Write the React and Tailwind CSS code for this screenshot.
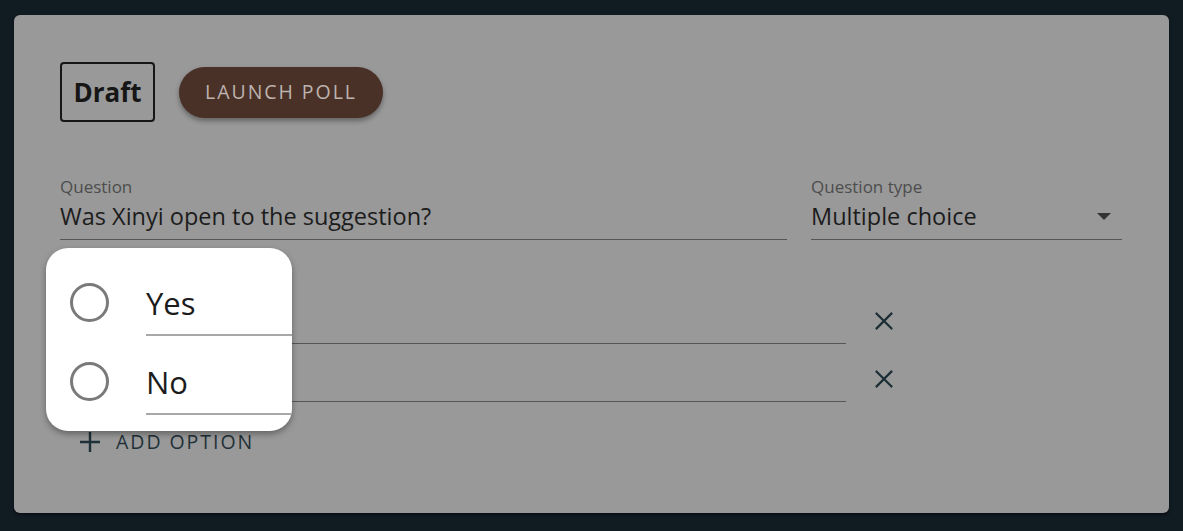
import React from 'react';

const options = ['Yes', 'No'];

function XIcon() {
  return (
    <svg width="22" height="22" viewBox="0 0 24 24" fill="none" stroke="#1c2e35" strokeWidth="2.4" strokeLinecap="square">
      <path d="M4 4l16 16M20 4L4 20" />
    </svg>
  );
}

export default function App() {
  return (
    <main
      className="min-h-[531px] bg-[#111b22] pt-[15px] pl-[14px] pr-[14px] pb-[18px]"
      style={{ fontFamily: '"Open Sans", "Noto Sans", sans-serif' }}
    >
      <div className="relative w-[1155px] h-[498px] rounded-[6px] bg-[#999999] shadow-[0_2px_3px_rgba(0,0,0,0.4)] pt-[47px] pl-[46px] pr-[47px]">
        {/* header */}
        <div className="flex items-center gap-[24px]">
          <div className="h-[60px] w-[95px] rounded-[4px] border-2 border-[#161616] flex items-center justify-center text-[26px] font-bold text-[#161616]">
            Draft
          </div>
          <button className="h-[51px] w-[204px] rounded-full bg-[#4a3128] shadow-[0_3px_5px_rgba(0,0,0,0.35)] text-[19.5px] tracking-[0.1em] text-[#bdb3ae]">
            LAUNCH POLL
          </button>
        </div>

        {/* question fields */}
        <div className="flex gap-[24px] mt-[54px]">
          <div className="w-[727px] border-b border-[#555555]">
            <div className="text-[17px] leading-[22px] text-[#4d4d4d]">Question</div>
            <div className="text-[23.5px] leading-[30px] mt-[3px] pb-[8px] text-[#1c1c1c]">Was Xinyi open to the suggestion?</div>
          </div>
          <div className="w-[311px] border-b border-[#555555]">
            <div className="text-[17px] leading-[22px] text-[#4d4d4d]">Question type</div>
            <div className="flex items-center justify-between mt-[3px] pb-[8px]">
              <span className="text-[23.5px] leading-[30px] text-[#1c1c1c]">Multiple choice</span>
              <svg width="14" height="7" viewBox="0 0 14 7" className="mr-[11px]">
                <path d="M0 0h14L7 7z" fill="#333" />
              </svg>
            </div>
          </div>
        </div>

        {/* options */}
        <div className="mt-[46px]">
          {options.map((o) => (
            <div key={o} className="flex items-end h-[58px]">
              <div className="w-[686px] ml-[100px] border-b border-[#555555] h-full" />
              <div className="self-center ml-[27px] mt-[12px]">
                <XIcon />
              </div>
            </div>
          ))}
        </div>

        <button className="flex items-center gap-[15px] mt-[25px] ml-[19px] text-[19.5px] tracking-[0.1em] text-[#1f3038]">
          <svg width="22" height="22" viewBox="0 0 22 22" stroke="#1f3038" strokeWidth="2.4">
            <path d="M11 1v20M1 11h20" />
          </svg>
          ADD OPTION
        </button>

        {/* spotlight callout */}
        <div className="absolute left-[32px] top-[233px] w-[246px] h-[183px] rounded-[22px] bg-white overflow-hidden shadow-[0_3px_6px_rgba(0,0,0,0.35)]">
          {options.map((o, i) => (
            <div key={o} className={'flex items-start ' + (i === 0 ? 'mt-[35px]' : 'mt-[26px]')}>
              <div className="ml-[24px] w-[39px] h-[39px] rounded-full border-[3px] border-[#7a7a7a] shrink-0" />
              <div className="ml-[37px] w-[200px] border-b-2 border-[#a8a8a8] h-[53px] pt-[2px] text-[31px] leading-[36px] text-[#1c1c1c]">
                {o}
              </div>
            </div>
          ))}
        </div>
      </div>
    </main>
  );
}
